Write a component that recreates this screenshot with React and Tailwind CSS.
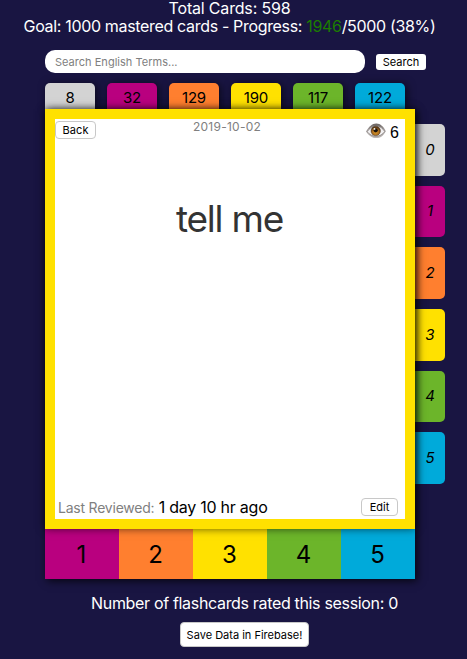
import React from 'react';

const topTabs = [
  { count: 8, color: 'bg-[#d3d3d3]' },
  { count: 32, color: 'bg-[#b9007f]' },
  { count: 129, color: 'bg-[#ff7f2f]' },
  { count: 190, color: 'bg-[#ffe100]' },
  { count: 117, color: 'bg-[#6cb52a]' },
  { count: 122, color: 'bg-[#00aada]' },
];

const ratings = topTabs.slice(1).map((tab, i) => ({ value: i + 1, color: tab.color }));

function Eye() {
  return (
    <svg width="20" height="16" viewBox="0 0 20 16" className="block">
      <defs>
        <linearGradient id="lid" x1="0" y1="0" x2="0" y2="1">
          <stop offset="0" stopColor="#69625f" />
          <stop offset="0.5" stopColor="#a9a4a3" />
          <stop offset="1" stopColor="#bdb7b5" />
        </linearGradient>
        <radialGradient id="iris" cx="0.5" cy="0.65" r="0.55">
          <stop offset="0" stopColor="#d9972b" />
          <stop offset="0.65" stopColor="#a96b1c" />
          <stop offset="1" stopColor="#553514" />
        </radialGradient>
      </defs>
      <path d="M0 8.500C3 3.500 6 .5 10.300.5c4.200 0 7.200 3.200 9.500 7.700-2.500 4.500-5.500 6.900-9.600 6.900C5.800 15.100 2.800 12.500 0 8.500Z" fill="url(#lid)" />
      <path d="M1.200 8.700C3.700 5 6.500 3 10.200 3c3.700 0 6.300 2.100 8.500 5.600-2.400 3.100-4.900 4.500-8.600 4.500-3.800 0-6.400-1.400-8.900-4.400Z" fill="#f2f0f1" stroke="#6b6463" strokeWidth="0.500" />
      <circle cx="9.700" cy="7.900" r="4.700" fill="url(#iris)" stroke="#4a3520" strokeWidth="0.500" />
      <circle cx="9.700" cy="7.300" r="2.100" fill="#17110f" />
      <circle cx="8.500" cy="5.900" r="0.900" fill="#fff" />
    </svg>
  );
}

export default function App() {
  return (
    <div className="h-[659px] w-[467px] overflow-hidden bg-[#191542] font-['Inter','Liberation_Sans',sans-serif] text-black">
      <header className="-mt-px h-[51px] w-[459px] text-center text-[16px] leading-[18px] whitespace-nowrap text-white">
        <p className="tracking-[-0.18px]">Total Cards: 598</p>
        <p className="tracking-[-0.33px]">
          Goal: 1000 mastered cards - Progress: <span className="text-[#1c7d00]">1946</span>/5000 (38%)
        </p>
      </header>

      <div className="ml-[45px] flex h-[33px] items-start gap-[11px]">
        <input
          className="h-[23px] w-[320px] rounded-[10px] bg-white pt-px pl-[10px] text-[11px] tracking-[0.02px] outline-none placeholder:text-[#808080]"
          placeholder="Search English Terms..."
        />
        <button className="mt-1 h-4 w-[50px] rounded-[3px] bg-white text-[11px] leading-[17px]">Search</button>
      </div>

      <main className="ml-[45px] w-[400px]">
        <div className="flex h-[26px] gap-3">
          {topTabs.map(({ count, color }) => (
            <div
              key={count}
              className={`h-[26px] w-[50px] rounded-t-[5px] pt-[5px] text-center text-[15px] leading-5 tracking-[-0.2px] shadow-[2px_1px_8px_rgba(0,0,0,0.6)] ${color}`}
            >
              {count}
            </div>
          ))}
        </div>

        <div className="flex">
          <div className="relative z-10 w-[370px] shadow-[2px_2px_8px_rgba(0,0,0,0.75)]">
            <section className="relative z-10 flex h-[420px] flex-col border-[10px] border-[#ffe100] bg-white shadow-[0_0_8px_rgba(0,0,0,0.6)]">
              <div className="grid grid-cols-[1fr_auto_1fr] items-start">
                <button className="mt-[2px] h-[18px] w-[41px] rounded-[4px] border border-[#c8c8c8] bg-white text-[11px] leading-4 tracking-[0.1px]">
                  Back
                </button>
                <time className="-ml-[6px] text-[12px] leading-4 tracking-[0.25px] text-[#808080]">2019-10-02</time>
                <div className="flex justify-end gap-[4px] pt-[4px] pr-[6px]">
                  <Eye />
                  <span className="font-['Liberation_Sans',sans-serif] text-[16px] leading-[19px]">6</span>
                </div>
              </div>
              <h1 className="mt-[54px] pr-px text-center text-[37px] leading-[46px] tracking-[-1.2px] text-[#333]">tell me</h1>
              <div className="mt-auto flex h-6 items-center justify-between pr-[7px] pl-[3px]">
                <p className="text-[16px] tracking-[-0.25px] whitespace-nowrap">
                  <span className="text-[14px] tracking-[-0.22px] text-[#808080]">Last Reviewed:</span> 1 day 10 hr ago
                </p>
                <button className="h-[18px] w-[37px] rounded-[4px] border border-[#c8c8c8] bg-white text-[11px] leading-4">
                  Edit
                </button>
              </div>
            </section>
            <div className="grid h-[50px] grid-cols-5">
              {ratings.map(({ value, color }) => (
                <button key={value} className={`h-[50px] pt-[2px] pr-px text-[24px] leading-[48px] ${color}`}>
                  {value}
                </button>
              ))}
            </div>
          </div>

          <aside className="mt-[15px] flex h-[360px] w-[30px] flex-col gap-[10px]">
            {topTabs.map(({ color }, level) => (
              <div
                key={level}
                className={`flex flex-1 items-center justify-center rounded-r-[5px] text-[15px] italic ${color}`}
              >
                {level}
              </div>
            ))}
          </aside>
        </div>
      </main>

      <footer className="flex w-[489px] flex-col items-center pt-[14px]">
        <p className="text-[16px] leading-[20px] tracking-[-0.33px] whitespace-nowrap text-white">
          Number of flashcards rated this session: 0
        </p>
        <button className="mt-[9px] h-[25px] w-[129px] rounded-[4px] border border-[#c8c8c8] bg-white pt-px text-[11px] whitespace-nowrap">
          Save Data in Firebase!
        </button>
      </footer>
    </div>
  );
}
